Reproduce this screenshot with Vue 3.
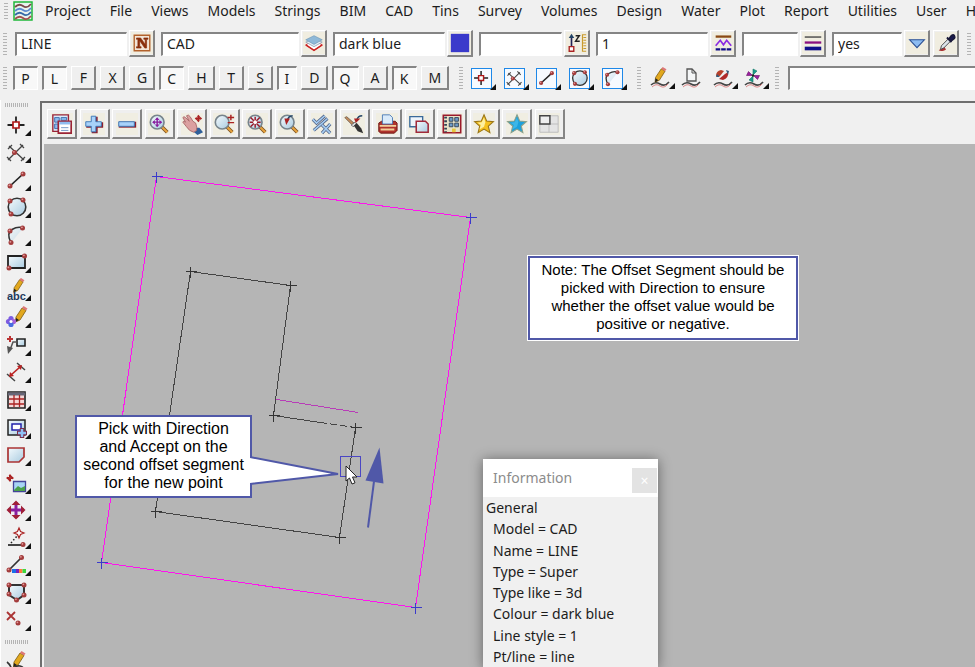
<script setup>
import { ref } from 'vue'

const menus = ['Project', 'File', 'Views', 'Models', 'Strings', 'BIM', 'CAD', 'Tins', 'Survey', 'Volumes', 'Design', 'Water', 'Plot', 'Report', 'Utilities', 'User', 'Help']

const fields = ref([
  { id: 'name', label: 'Name', value: 'LINE', size: 'w-m', icon: 'name' },
  { id: 'model', label: 'Model', value: 'CAD', size: 'w-l', icon: 'layers' },
  { id: 'colour', label: 'Colour', value: 'dark blue', size: 'w-m', icon: 'swatch' },
  { id: 'height', label: 'Height', value: '', size: 'w-s', icon: 'height' },
  { id: 'style', label: 'Line style', value: '1', size: 'w-m', icon: 'linestyle' },
  { id: 'weight', label: 'Weight', value: '', size: 'w-xs', icon: 'weight' },
  { id: 'tinable', label: 'Tinable', value: 'yes', size: 'w-xm', icon: 'down' }
])

const snaps = ref('PLFXGCHTSIDQAKM'.split('').map((key) => ({ key, on: 'PLCIQK'.includes(key) })))
const command = ref('')

const ball = (x, y) => `<circle cx="${x}" cy="${y}" r="2.5" fill="#a33c3c"/><circle cx="${x - 0.6}" cy="${y - 0.7}" r="0.9" fill="#e09a9a"/>`
const wave = '<path d="M3 19q4-4 9-1t9-2" fill="none" stroke="#444" stroke-width="1.6"/><path d="M4 21q4-4 8-1t8-2" fill="none" stroke="#d88" stroke-width="1"/>'
const pencil = '<path d="M9 12 15 3l4 2.500-6 9.500-4.500 2z" fill="#e2a81e" stroke="#7a5a12" stroke-width=".8"/><path d="m15 3 1.500-2 4 2.500L19 5.500z" fill="#d77"/><path d="m8.500 17 .5-4 3 2z" fill="#222"/>'
const lens = '<path d="m15 15 6 6" stroke="#7a5222" stroke-width="4"/><path d="m15 15 6 6" stroke="#e8a33c" stroke-width="2.200"/><circle cx="10" cy="10" r="7.500" fill="url(#glass)" stroke="#77848c" stroke-width="1.800"/>'
const move = (x, y, r, c) => `<g transform="translate(${x} ${y})" stroke="${c}" fill="${c}"><path d="M${-r} 0H${r}M0 ${-r}V${r}" stroke-width="1.5"/><path stroke="none" d="M${-r - 1} 0l3-2.500v5zM${r + 1} 0l-3-2.500v5zM0 ${-r - 1}l-2.500 3h5zM0 ${r + 1}l-2.500-3h5z"/></g>`
const star = (c1, c2, s) => `<path d="m12 2 2.900 6.800 7.300.6-5.500 4.900 1.700 7.200-6.400-3.900-6.400 3.900 1.700-7.200L1.800 9.400l7.300-.6z" fill="${c1}" stroke="${s}" stroke-width="1.200"/><path d="m12 5 1.500 5-1.500 5-5 3 1.500-5L5 10.500l4.500-.5z" fill="${c2}"/>`

const point = '<path d="M3.500 12h17M12 3.500v17" stroke="#222" stroke-width="1.800"/><path d="M9 9h6v6H9z" fill="#fff" stroke="#b01818" stroke-width="1.700"/>'
const cross = `<path d="M4 20 19 5M5 6l15 14M3 17l4 4M16 4l4 4M4 9l4-4M17 21l4-4" stroke="#444" stroke-width="1.300" fill="none"/>${ball(10.5, 12.5)}`
const line = `<path d="M6 18 19 6" stroke="#222" stroke-width="1.700"/>${ball(6, 18)}${ball(19, 6)}`
const circle = `<circle cx="13" cy="12" r="8.800" fill="url(#glass)" stroke="#333" stroke-width="1.600"/>${ball(6, 6)}${ball(19, 5)}${ball(7, 19)}`
const arc = `<path d="M7 20Q3 9 9 6t10-1L11 15z" fill="url(#glass)" opacity=".6"/><path d="M7 20Q2 10 8 6.500T19 5" fill="none" stroke="#333" stroke-width="1.600"/>${ball(6, 8)}${ball(18.5, 5)}${ball(7, 19.5)}`

const art = {
  name: '<path d="M3.500 3.500h17v17h-17z" fill="#f3e6d8" stroke="#b3622c" stroke-width="1.500"/><path d="M6 17.500v-1.500h1.500V8H6V6.500h4.500l5 7V8H14V6.500h4.500V8H17v9.500h-2l-5.500-8V16H11v1.500z" fill="#8a2f0c" stroke="#8a2f0c" stroke-width=".7"/>',
  layers: '<path d="m12 9 9 5-9 6-9-6z" fill="#fff" stroke="#c33" stroke-width="1"/><path d="m3 14 9 6 9-6" fill="none" stroke="#c22" stroke-width="1.800"/><path d="m12 7 9 4-9 5-9-5z" fill="#e4eef5" stroke="#9ab"/><path d="m12 4 9 4.500-9 5-9-5z" fill="#8fb9d8" stroke="#6e96b5" stroke-width=".7"/>',
  swatch: '<path d="M2 2h20v20H2z" fill="#3a3acb"/>',
  height: '<path d="M6 5v11" stroke="#225" stroke-width="1.800"/><path d="m6 2-3 4.500h6z" fill="#246"/><path d="M3.500 16h5v5h-5z" fill="#fff" stroke="#a22" stroke-width="1.500"/><path d="M10.500 4h4l-4 6h4.500" fill="none" stroke="#222" stroke-width="1.600"/><path d="M22 3h-4v18h4M22 6h-3M22 9h-3M22 12h-4M22 15h-3M22 18h-3" fill="none" stroke="#c99b2e" stroke-width="1.300"/>',
  linestyle: '<path d="M4 5h17" stroke="#8a4a14" stroke-width="2.500"/><path d="m4 15 5-6 3.500 5L16 9l5 6" fill="none" stroke="#8a2be2" stroke-width="1.800"/><path d="M4 19h17" stroke="#10108a" stroke-width="2.500" stroke-dasharray="5 1"/>',
  weight: '<path d="M3 5.500h18" stroke="#444" stroke-width="1.500"/><path d="M3 11.500h18" stroke="#8a1080" stroke-width="2.500"/><path d="M3 18h18" stroke="#10108a" stroke-width="4"/>',
  down: '<path d="M4 8.500h16L12 17z" fill="#8dbcf2" stroke="#2a4f94" stroke-width="1.200"/>',
  picker: '<path d="M4 20c2 1 5 1 8-1l-2-3z" fill="#a33"/><path d="m6 19 1-4 8-8 2.500 2.500-8 8z" fill="#dce4e8" stroke="#444"/><path d="m13 6 5 5M15 8l3-4q2-1.500 3 0t0 3l-4 3z" fill="#1a1a55" stroke="#1a1a3a" stroke-width="2"/>',
  point, cross, line, circle, arc,
  rect: `<path d="M4 6h17v12H4z" fill="url(#glass)" stroke="#222" stroke-width="1.800"/>${ball(20.5, 6)}${ball(5, 18)}`,
  text: `<g transform="translate(2 -1) scale(.9)">${pencil}</g><text x="3" y="22" font-size="11" font-weight="700" font-family="Liberation Sans, sans-serif" fill="#223a5c">abc</text>`,
  flower: `<g transform="translate(3 0)">${pencil}</g><g fill="#7d5be0"><circle cx="7" cy="13.500" r="2.600"/><circle cx="4.500" cy="16.500" r="2.600"/><circle cx="9.500" cy="16.500" r="2.600" fill="#a860d8"/><circle cx="7" cy="19.500" r="2.600" fill="#4a6be0"/></g><circle cx="7" cy="16.500" r="1.500" fill="#fff"/>`,
  leader: '<path d="M3 6h6M6 3v6" stroke="#b33" stroke-width="2"/><path d="M13 6h8v7h-8z" fill="url(#glass)" stroke="#222" stroke-width="1.600"/><path d="M13 9H9l-3 8" fill="none" stroke="#555" stroke-width="1.500"/><path d="m3 13 6 2-5 6z" fill="#555"/>',
  dimension: '<path d="M3 14l8 7M13 3l8 7" stroke="#444" stroke-width="1.500"/><path d="m7 15 9-8" stroke="#b22" stroke-width="1.600"/><path d="m5 17 1-5 4 4zM18 5l-1 5-4-4z" fill="#b22"/>',
  table: '<path d="M4 4h17v16H4z" fill="#f4d8d8" stroke="#222" stroke-width="1.600"/><path d="M4 6h17" stroke="#667" stroke-width="3"/><path d="M5 11h15M5 16h15M10 7v12M15.500 7v12" stroke="#a22" stroke-width="1.300"/>',
  viewport: '<path d="M4 4h17v15H4z" fill="url(#glass)" stroke="#222" stroke-width="1.500"/><path d="M8 8h9v6H8z" fill="#fff" stroke="#22a" stroke-width="1.500"/><path d="M18 12v10M13 17h10" stroke="#7b2a4a" stroke-width="4.500"/><path d="M18 13v8M14 17h8" stroke="#8fc0f5" stroke-width="2.500"/>',
  polygon: '<path d="M4 5h16v9l-5 5H4z" fill="url(#glass)" stroke="#a33" stroke-width="1.700"/>',
  image: `${move(6, 7, 3, '#a22')}<path d="M9.500 10.500h12v10h-12z" fill="#a8d4f5" stroke="#449" stroke-width="1.300"/><path d="m10 19 4-4 3 2 4-2v5H10z" fill="#4aa14a"/>`,
  move: '<path d="M4 12h16M12 4v16" stroke="#8a1fa0" stroke-width="3"/><path d="m2.500 12 4.500-4.500v9zM21.500 12 17 7.500v9zM12 2.500 7.500 7h9zM12 21.500 7.500 17h9z" fill="#a02038"/>',
  sparkle: `<path d="m7 17 7-8" stroke="#222" stroke-width="1.500" stroke-dasharray="1.500 2"/><path d="M4 19h15" stroke="#444" stroke-width="2"/><path d="m15 2 1.500 3.500L20 7l-3.500 1.500L15 12l-1.500-3.500L10 7l3.500-1.500z" fill="#fff" stroke="#a22" stroke-width="1.200"/>${ball(19, 18.5)}`,
  colourline: `<path d="M5 17 17 5" stroke="#333" stroke-width="1.700"/>${ball(5, 17)}${ball(17.5, 4.5)}<path d="M8 16h4v4H8z" fill="#1b6fe8"/><path d="M12 16h3v4h-3z" fill="#7a22b8"/><path d="M15 16h3.500v4H15z" fill="#ff7a3c"/><path d="M18.500 16H22v4h-3.500z" fill="#3cd83c"/>`,
  shield: `<path d="M5 4h15v10l-7 5-8-5z" fill="url(#glass)" stroke="#333" stroke-width="2"/>${ball(5, 4)}${ball(20, 4)}${ball(5, 13)}${ball(20, 14)}${ball(12.5, 19)}`,
  erase: `<path d="m3 4 8 8M11 4l-8 8" stroke="#a33" stroke-width="1.800"/>${ball(14, 15)}`,
  edit: `<g transform="translate(1 0)">${pencil}</g><path d="M3 12q4 3 5 9 3-6 8-5t2 5" fill="none" stroke="#333" stroke-width="1.600"/>`,
  draw: `${wave}<g transform="translate(-1 0) scale(.95)">${pencil}</g>`,
  page: `${wave}<path d="M8 3h5l4 4v8H8z" fill="#f4f6f7" stroke="#555" stroke-width="1.300"/><path d="M13 3v4h4" fill="none" stroke="#555"/>`,
  swap: `${wave}<path d="M5 10q0-5 5-6l3 1-4 5z" fill="#b8402a"/><path d="M17 6q1 6-5 8l-4-1 6-5z" fill="#b02a2a"/><path d="m5 11 1-3 3 3zM15 4l3 1-1 4z" fill="#345a7a"/>`,
  spin: `${wave}<path d="M11 9V3l4 2zM11 10v6l-4-2z" fill="#1a9a8a" stroke="#176" stroke-width=".6"/><path d="M11.500 9.500h6l-2 4zM10.500 9.500h-6l2-4z" fill="#9a1fa0" stroke="#616" stroke-width=".6"/><circle cx="11" cy="9.500" r="1.200" fill="#222"/>`,
  windows: '<path d="M2 2h17v18H2z" fill="#dcebfa" stroke="#9b2335" stroke-width="1.500"/><path d="M4 5h5v5H4zM11 5h6v3h-6zM4 12h4v5H4z" fill="#8ebcf0" stroke="#3b6ba8"/><path d="M8 9h14v13H8z" fill="#fff" stroke="#9b2335" stroke-width="1.800"/><path d="M9 11h12" stroke="#8ebcf0" stroke-width="3"/><path d="M11 16h8M11 19h8" stroke="#6c93c4"/>',
  plus: '<path d="M9.500 4h6.500v6h6v6h-6v6h-6.500v-6h-6v-6h6z" fill="#8b2030"/><path d="M9 3.500h5v6h6v5h-6v6H9v-6H3v-5h6z" fill="#a8d2fa" stroke="#3a78b8"/>',
  minus: '<path d="M3 9.500h19V16H3z" fill="#8b2030"/><path d="M3 9.500h17v5H3z" fill="#a8d2fa" stroke="#3a78b8"/>',
  zoommove: lens + move(10, 10, 4.5, '#8a1fa0'),
  hand: '<path d="M15 16l5 0 4 5-6 3-5-4z" fill="#2f5f9a"/><path d="M14 21q-5-1-8-6L2 10q0-2 3 0L2 5q1-2 3 0l4 4-3-6q2-2 4 1l3 5 3 2q2 5 1 8z" fill="#dba0a0" stroke="#a86a6a"/>' + move(19, 6, 3, '#a22'),
  zoompm: lens + '<path d="M16 5h7M19.500 2v6M16 10.500h7" stroke="#a22" stroke-width="1.600"/>',
  zoomfit: lens + '<path d="m5 5 10 10M15 5 5 15M10 4v12M4 10h12" stroke="#9b1a2a" stroke-width="1.600"/><circle cx="10" cy="10" r="2" fill="#fff"/>',
  zoomprev: lens + '<path d="M16 3q-5 0-6 6" fill="none" stroke="#246" stroke-width="1.600"/><path d="M7 6h6l-4 7z" fill="#a22"/>',
  ticks: '<path d="m2 7 4 4 9-8M12 13l9 9M21 12l-9 10M3 19 18 6" fill="none" stroke="#4d5f85" stroke-width="3.400"/><path d="m2 7 4 4 9-8M12 13l9 9M21 12l-9 10M3 19 18 6" fill="none" stroke="#a6cdf2" stroke-width="1.800"/>',
  brush: '<path d="m2 5 8 8 2-2-8-7z" fill="#c48a5a" stroke="#765"/><path d="m9 13 4-3 2 2-4 3z" fill="#ddd" stroke="#666"/><path d="m12 14 3-3 5 6 2 5-6-2z" fill="#333"/><path d="M21 3q-5 0-6 5" fill="none" stroke="#246" stroke-width="1.500"/><path d="m12 6 7 0-5 5z" fill="#a22"/>',
  printer: '<path d="m3 11 3-2h15l2 2v8l-3 3H5l-2-2z" fill="#b0322c" stroke="#6b1515"/><path d="M7 2h8l3 3v7H7z" fill="#d9eafa" stroke="#4a7ab5"/><path d="M4 14h18M5 18h15" stroke="#f2cf9a" stroke-width="2"/>',
  copies: '<path d="M2 4h14v11H2z" fill="#eef5fb" stroke="#3a6a9a" stroke-width="1.500"/><path d="M9 9h10l3 3v9H9z" fill="url(#glass)" stroke="#a02a3a" stroke-width="1.700"/>',
  building: '<path d="M2.500 2.500h19v19h-19z" fill="#e8e3c8" stroke="#9b1a2a" stroke-width="1.700"/><path d="M5 4v17" stroke="#345" stroke-width="3" stroke-dasharray="2 2"/><path d="M9 5h4v4H9zM15 5h4v4h-4zM9 11h4v4H9zM15 11h4v4h-4z" fill="#6f9cc8" stroke="#345"/><path d="M12 17h4v4h-4z" fill="#e8c73c"/>',
  gold: star('#f5c11e', '#fdf0a0', '#9a7618'),
  blue: star('#1ba0dc', '#3cb6e8', '#8aa08a'),
  panes: '<path d="M2 3h20v18H2z" fill="#e4e4e4" stroke="#bbb"/><path d="M12 3v18M2 12h20" stroke="#bbb"/><path d="M2 3h11v9H2z" fill="#eee" stroke="#444" stroke-width="1.600"/>'
}

const draws = [
  ['point', 'Point'], ['cross', 'Intersection'], ['line', 'Line'], ['circle', 'Circle'], ['arc', 'Arc'], ['rect', 'Rectangle'],
  ['text', 'Text'], ['flower', 'Symbol'], ['leader', 'Leader'], ['dimension', 'Dimension'], ['table', 'Table'], ['viewport', 'Viewport'],
  ['polygon', 'Polygon'], ['image', 'Image'], ['move', 'Move'], ['sparkle', 'Insert vertex'], ['colourline', 'Line colour'], ['shield', 'Boundary'], ['erase', 'Delete vertex']
]
const shapes = draws.slice(0, 5)
const edits = [['draw', 'Edit string'], ['page', 'New string'], ['swap', 'Reverse string'], ['spin', 'Rotate string']]
const viewTools = [
  ['windows', 'Window list'], ['plus', 'Add model'], ['minus', 'Remove model'], ['zoommove', 'Zoom'], ['hand', 'Pan'], ['zoompm', 'Zoom in or out'],
  ['zoomfit', 'Fit view'], ['zoomprev', 'Previous view'], ['ticks', 'Toggles'], ['brush', 'Redraw'], ['printer', 'Print'], ['copies', 'Copy view'],
  ['building', 'Layout'], ['gold', 'Favourites'], ['blue', 'Shared favourites'], ['panes', 'Split view']
]

const outerCorners = [[156, 176], [470, 217], [415, 607], [101, 562]]
const innerCorners = [[190, 271], [290, 285], [273, 415], [355, 427], [339, 537], [155, 511]]
const cross5 = (pts) => pts.map(([x, y]) => `M${x - 5} ${y}h11M${x} ${y - 5}v11`).join('')
const join = (pts) => pts.map((p) => p.join(',')).join(' ')

const info = ['Model = CAD', 'Name = LINE', 'Type = Super', 'Type like = 3d', 'Colour = dark blue', 'Line style = 1', 'Pt/line = line']
</script>

<template>
  <div class="app">
    <svg class="defs" aria-hidden="true">
      <defs>
        <linearGradient id="glass" x1="0" y1="0" x2="1" y2="1">
          <stop offset="0" stop-color="#f4fafd" />
          <stop offset="1" stop-color="#a9cbe0" />
        </linearGradient>
      </defs>
    </svg>

    <header>
      <nav class="row menu">
        <span class="grip"></span>
        <svg class="logo" viewBox="0 0 20 20" aria-hidden="true">
          <path d="M1 1h18v18H1z" fill="#e9f3ee" stroke="#1fb83a" stroke-width="1.500" />
          <g fill="none" stroke-width="1.800">
            <path d="M2 6q4-4 8-1t8-2" stroke="#7a4a4a" />
            <path d="M2 10q4-4 8-1t8-2" stroke="#5a8ad0" />
            <path d="M2 14q4-4 8-1t8-2" stroke="#356aa8" />
            <path d="M2 18q4-4 8-1t8-2" stroke="#a05050" />
          </g>
        </svg>
        <button v-for="m in menus" :key="m" type="button" class="menu-item">{{ m }}</button>
      </nav>

      <div class="row props">
        <span class="grip"></span>
        <div v-for="f in fields" :key="f.id" class="field">
          <input :id="f.id" v-model="f.value" :aria-label="f.label" :class="['box', f.size]" type="text" />
          <button type="button" class="raised pick" :aria-label="'Choose ' + f.label">
            <svg viewBox="0 0 24 24" v-html="art[f.icon]"></svg>
          </button>
        </div>
        <button type="button" class="raised pick picker" aria-label="Pick properties">
          <svg viewBox="0 0 24 24" v-html="art.picker"></svg>
        </button>
        <span class="grip end"></span>
      </div>

      <div class="row snapbar">
        <span class="grip"></span>
        <div class="snaps">
          <button v-for="s in snaps" :key="s.key" type="button" :class="['raised', 'snap', { on: s.on, slim: s.key === 'I' }]" :aria-pressed="s.on" @click="s.on = !s.on">{{ s.key }}</button>
        </div>
        <span class="grip"></span>
        <div class="shapes">
          <button v-for="[icon, label] in shapes" :key="icon" type="button" class="tool" :aria-label="label">
            <svg class="framed" viewBox="1 1 23 23" v-html="art[icon]"></svg>
          </button>
        </div>
        <span class="grip"></span>
        <div class="edits">
          <button v-for="[icon, label] in edits" :key="icon" type="button" :class="['tool', { plain: icon === 'page' }]" :aria-label="label">
            <svg viewBox="0 0 24 24" v-html="art[icon]"></svg>
          </button>
        </div>
        <span class="grip"></span>
        <input v-model="command" class="box command" type="text" aria-label="Command" />
      </div>
    </header>

    <main>
      <aside>
        <span class="grip flat"></span>
        <div class="draws">
          <button v-for="[icon, label] in draws" :key="icon" type="button" class="tool" :aria-label="label">
            <svg viewBox="0 0 24 24" v-html="art[icon]"></svg>
          </button>
        </div>
        <span class="grip flat"></span>
        <button type="button" class="tool last" aria-label="Edit">
          <svg viewBox="0 0 24 24" v-html="art.edit"></svg>
        </button>
      </aside>

      <section class="view">
        <div class="view-tools">
          <button v-for="[icon, label] in viewTools" :key="icon" type="button" class="raised view-btn" :aria-label="label">
            <svg viewBox="0 0 24 24" v-html="art[icon]"></svg>
          </button>
        </div>

        <div class="canvas">
          <svg class="plan" aria-hidden="true">
            <g transform="translate(-43.5 -143.5)" fill="none">
              <g shape-rendering="crispEdges">
                <polygon :points="join(outerCorners)" stroke="#ff14ee" />
                <polyline points="355,427 339,537 155,511 190,271 290,285 273,415 320,422" stroke="#444" />
                <path d="m320 422 35 5" stroke="#444" stroke-dasharray="7 3" />
                <path d="m276 399 82 13" stroke="#b83cb8" />
                <path :d="cross5(innerCorners)" stroke="#333" />
                <path :d="cross5(outerCorners)" stroke="#3a3acb" />
                <path d="M340 456h20v20h-20z" stroke="#4a46c4" />
              </g>
              <path d="m367.500 527 6-46" stroke="#5058a8" stroke-width="2" />
              <path d="m379 447 4 36-18-3z" fill="#5058a8" />
            </g>
          </svg>

          <div class="callout">
            Pick with Direction<br />and Accept on the<br />second offset segment<br />for the new point
            <svg class="tail" viewBox="0 0 90 30" aria-hidden="true">
              <path d="m0 1 88 17L0 28" fill="#fff" stroke="#5058a8" stroke-width="2" />
            </svg>
          </div>

          <svg class="cursor" viewBox="0 0 13 20" aria-hidden="true">
            <path d="M1 1v15l3.500-3 2.500 6 3-1.200-2.500-5.800H12z" fill="#fff" stroke="#222" />
          </svg>

          <p class="note">Note: The Offset Segment should be<br />picked with Direction to ensure<br />whether the offset value would be<br />positive or negative.</p>

          <section class="window" aria-label="Information">
            <div class="title">
              <h2>Information</h2>
              <button type="button" aria-label="Close">×</button>
            </div>
            <ul>
              <li class="head">General</li>
              <li v-for="line in info" :key="line">{{ line }}</li>
            </ul>
          </section>
        </div>
      </section>
    </main>
  </div>
</template>

<style>
body {
  background: #f0f0f0;
  overflow: hidden;
}
</style>

<style scoped>
.app {
  display: flex;
  flex-direction: column;
  height: 100vh;
  overflow: hidden;
  background: #f0f0f0;
  color: #1c1c1c;
  font: 14px/20px "Noto Sans", "Open Sans", sans-serif;
}
.app * {
  box-sizing: border-box;
}
button, input {
  font: inherit;
  color: inherit;
  margin: 0;
}
button {
  padding: 0;
  border: 0;
  background: none;
}
svg {
  display: block;
}
.defs {
  position: absolute;
  width: 0;
  height: 0;
}
header {
  flex: none;
  height: 100px;
}
.row {
  display: flex;
  align-items: center;
  white-space: nowrap;
  overflow: hidden;
}
.row > * {
  flex: none;
}
.grip {
  width: 4px;
  height: 22px;
  background: repeating-linear-gradient(#b4b4b4 0 1px, #f0f0f0 1px 3px);
}
.menu {
  height: 22px;
  padding-left: 4px;
}
.menu .grip {
  height: 16px;
}
.logo {
  width: 20px;
  height: 20px;
  margin: 0 12px 0 5px;
}
.menu-item {
  margin-right: 19px;
}
.props {
  height: 43px;
  padding-left: 3px;
  gap: 6px;
}
.props .grip:first-child {
  margin-right: 2px;
}
.field {
  display: flex;
  align-items: center;
  gap: 2px;
}
.box {
  height: 24px;
  padding: 0 4px 2px;
  border: 2px solid #858585;
  border-right: 1px solid #fff;
  border-bottom: 1px solid #fff;
  border-radius: 0;
  background: #fff;
  outline: 0;
}
.w-xs { width: 56px; }
.w-xm { width: 70px; }
.w-s { width: 83px; }
.w-m { width: 112px; }
.w-l { width: 138px; }
.raised {
  border: 2px solid #858585;
  border-left: 1px solid #fff;
  border-top: 1px solid #fff;
  background: #efefef;
}
.pick {
  display: grid;
  place-items: center;
  width: 26px;
  height: 27px;
}
.pick svg {
  width: 22px;
  height: 22px;
  background: #f0ede0;
}
.picker {
  margin-left: -3px;
}
.props .end {
  margin-left: 2px;
}
.snapbar {
  height: 26px;
  padding-left: 3px;
}
.snaps {
  display: flex;
  gap: 4px;
  margin: 0 10px 0 6px;
}
.snap {
  min-width: 25px;
  height: 24px;
  padding: 0 6px 0 7px;
  line-height: 20px;
}
.snap.slim {
  min-width: 20px;
}
.snap.on {
  padding: 0 7px 0 6px;
  border: 1px solid #fff;
  border-top: 2px solid #858585;
  border-left: 2px solid #858585;
  background: #f8f8f8;
}
.tool {
  position: relative;
  display: block;
}
.tool svg {
  width: 24px;
  height: 24px;
}
.tool::after {
  content: "";
  position: absolute;
  right: -3px;
  bottom: 1px;
  border: 3px solid #111;
  border-left-color: transparent;
  border-top-color: transparent;
}
.tool.plain::after {
  display: none;
}
.shapes {
  display: grid;
  grid-template-columns: repeat(5, 1fr);
  width: 163px;
  margin: 0 3px 0 8px;
}
.shapes .tool {
  width: 22px;
}
.shapes .framed {
  width: 21px;
  height: 21px;
  border: 1px solid #1e88e8;
  background: #f6faff;
}
.shapes .tool::after {
  bottom: -1px;
}
.edits {
  display: grid;
  grid-template-columns: repeat(4, 1fr);
  width: 125px;
  margin: 0 2px 0 7px;
}
.edits .tool {
  width: 24px;
}
.row > .command {
  flex: 1;
  margin-left: 9px;
  border-right: 0;
}
main {
  flex: 1;
  display: flex;
  min-height: 0;
}
aside {
  flex: none;
  width: 40px;
  padding: 3px 0 0 4px;
  border-left: 1px solid #fff;
  overflow: hidden;
}
.grip.flat {
  display: block;
  width: 24px;
  height: 4px;
  background: repeating-linear-gradient(90deg, #b4b4b4 0 1px, #f0f0f0 1px 2px);
}
.draws {
  display: grid;
  grid-template-rows: repeat(19, 1fr);
  align-items: center;
  height: 523px;
  margin: 4px 0 6px;
}
.draws .tool, .last {
  width: 24px;
  margin-left: -1px;
}
.last {
  margin-top: 6px;
}
.last::after {
  display: none;
}
.view {
  flex: 1;
  display: flex;
  flex-direction: column;
  min-width: 0;
  margin-top: 1px;
  border-top: 2px solid #6e6e6e;
  border-left: 2px solid #6e6e6e;
}
.view-tools {
  flex: none;
  display: grid;
  grid-template-columns: repeat(16, 1fr);
  width: 520px;
  height: 41px;
  padding-top: 6px;
  margin-left: 5px;
}
.view-btn {
  display: grid;
  place-items: center;
  width: 30px;
  height: 30px;
}
.view-btn svg {
  width: 22px;
  height: 22px;
  background: #f0eee2;
}
.canvas {
  position: relative;
  flex: 1;
  margin-left: 2px;
  overflow: hidden;
  background: #b5b5b5;
}
.plan {
  width: 100%;
  height: 100%;
}
.callout, .note {
  position: absolute;
  margin: 0;
  border: 2px solid #5058a8;
  background: #fff;
  color: #000;
  font: 16px/18px "Liberation Sans", Arial, sans-serif;
  text-align: center;
  white-space: nowrap;
}
.callout {
  left: 31px;
  top: 271px;
  width: 177px;
  height: 83px;
  padding-top: 3px;
}
.tail {
  position: absolute;
  left: 173px;
  top: 39px;
  width: 90px;
  height: 30px;
}
.note {
  left: 484px;
  top: 112px;
  width: 270px;
  height: 84px;
  padding-top: 3px;
  font-size: 15px;
  box-shadow: 0 0 0 1px #fff;
}
.cursor {
  position: absolute;
  left: 301px;
  top: 321px;
  width: 13px;
  height: 20px;
}
.window {
  position: absolute;
  left: 439px;
  top: 315px;
  width: 175px;
  background: #f0f0f0;
  box-shadow: 0 1px 12px rgba(0, 0, 0, 0.45);
}
.title {
  display: flex;
  align-items: center;
  justify-content: space-between;
  height: 38px;
  padding-left: 10px;
  background: #fff;
}
.title h2 {
  margin: 0;
  color: #8c8c8c;
  font-size: 14px;
  font-weight: 400;
}
.title button {
  width: 25px;
  height: 25px;
  margin: 5px 1px 0 0;
  background: #e3e3e3;
  color: #fff;
}
ul {
  display: grid;
  grid-template-rows: repeat(8, 1fr);
  height: 171px;
  margin: 0;
  padding: 1px 0 0 10px;
  list-style: none;
}
.head {
  margin-left: -7px;
}
</style>
